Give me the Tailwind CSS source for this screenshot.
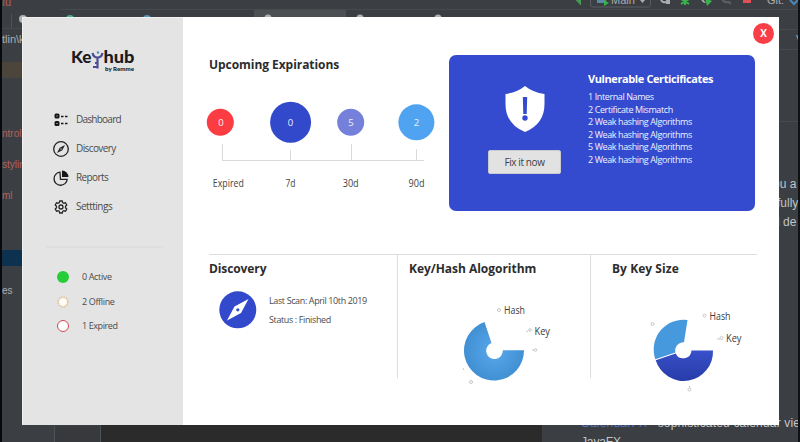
<!DOCTYPE html>
<html lang="en">
<head>
<meta charset="utf-8">
<title>Keyhub</title>
<script src="https://cdn.jsdelivr.net/npm/@tailwindcss/browser@4"></script>
</head>
<body class="relative h-[442px] w-[800px] overflow-hidden bg-[#3b3e43] font-['Open_Sans','Noto_Sans',sans-serif] text-[#2c2c2c]">

<!-- IDE behind the window -->
<svg class="absolute inset-0" width="800" height="442" viewBox="0 0 800 442" font-family="Liberation Sans, sans-serif">
  <rect x="101" y="425" width="441" height="17" fill="#2b2b2b"/>
  <rect x="55" y="426" width="45" height="16" fill="#37393c"/>
  <path d="M54.500 426v16M100.500 426v16" stroke="#505356"/>
  <rect x="0" y="62" width="22" height="16" fill="#4b453c"/>
  <rect x="0" y="250" width="22" height="16" fill="#0d324f"/>
  <path d="M0 28.500h22M60 9.500h740" stroke="#474a4d"/>
  <rect x="254" y="10" width="92" height="8" fill="#4d5053"/>
  <path d="M779 29.500h21M779 49.500h21M779 121.500h21" stroke="#474a4d"/>
  <path d="M11.500 14v14" stroke="#505356"/>
  <g fill="#aeb2b5"><circle cx="23" cy="19" r="4"/><circle cx="268" cy="18" r="3.500"/><circle cx="360" cy="18" r="3.500"/><circle cx="438" cy="18" r="3.500"/></g>
  <circle cx="70" cy="19" r="4" fill="#49ad8d"/><circle cx="147" cy="19" r="4" fill="#5695b5"/>
  <g font-size="11" fill="#aaaeb1">
    <text x="2" y="6" fill="#b36058">ıu</text>
    <text x="2" y="43">tlin\k</text>
    <text x="2" y="137" font-size="10" fill="#b36058">ntrol</text>
    <text x="2" y="168" font-size="10" fill="#b36058">styling</text>
    <text x="2" y="199" font-size="10" fill="#b36058">ml</text>
    <text x="2" y="294" font-size="10">es</text>
    <text x="796" y="43">V</text>
  </g>
  <rect x="590.500" y="-4" width="60" height="11" rx="2" fill="none" stroke="#5a5d60"/>
  <rect x="597" y="-4" width="9" height="7" fill="#5d87a8"/><path d="M604 0l5 3-5 3z" fill="#37b34a"/>
  <text x="611" y="4" font-size="11" fill="#aaaeb1">Main</text>
  <path d="M640 0h5l-2.500 3z" fill="#aaaeb1"/>
  <path d="M574-3l6 6v-6" stroke="#499c54" stroke-width="2" fill="none"/>
  <path d="M661-2q0 5 5 4" stroke="#aaaeb1" stroke-width="2" fill="none"/><rect x="666" y="0" width="4" height="4" fill="#aaaeb1"/>
  <path d="M685-4v9M681 4l8-5M689 4l-8-5" stroke="#38b549" stroke-width="2"/>
  <path d="M701-3q0 6 5 6z" fill="#aaaeb1"/><path d="M705-2l7 3-5 5z" fill="#38b549"/>
  <path d="M722-2q1 5 7 4l2 2" stroke="#5d6063" stroke-width="2" fill="none"/>
  <rect x="743" y="-4" width="8" height="7" fill="#e05055"/>
  <text x="767" y="4" font-size="11" fill="#aaaeb1">Git:</text>
  <path d="M790 0l4 4 4-4" stroke="#4b87b8" stroke-width="2" fill="none"/>
  <g font-size="12" fill="#c2c4c6">
    <text x="773" y="188">ou a</text><text x="777" y="207">fully</text><text x="777" y="226">l de</text>
    <text x="581" y="427" fill="#5673b8" textLength="66">CalendarFX</text>
    <text x="650" y="427" textLength="150">- sophisticated calendar vie</text>
    <text x="581" y="446" textLength="40">JavaFX</text>
  </g>
  <rect width="2" height="442" fill="#07090c"/><rect x="798" width="2" height="442" fill="#101215"/>
</svg>

<!-- Application window -->
<div class="absolute left-[22px] top-[17px] flex h-[408px] w-[757px] bg-white">
  <aside class="flex w-[161px] shrink-0 flex-col border-l border-t border-[#f1f1f1] bg-[#e4e4e4]">
    <svg class="ml-[47px] mt-[29px]" width="68" height="28" viewBox="0 0 68 28" font-family="Lato, sans-serif" font-weight="900" fill="#1c1b20">
      <text x="1" y="16" font-size="17" textLength="20.500" lengthAdjust="spacingAndGlyphs">Ke</text>
      <text x="33.500" y="16" font-size="17" textLength="31" lengthAdjust="spacingAndGlyphs">hub</text>
      <path d="M22.500 6q1 4.500 5 4.500t5-4.500M27.500 10v11.500M27.500 16h-2.500M27.500 20h-4.500" fill="none" stroke="#4b4c91" stroke-width="2.200"/>
      <circle cx="28" cy="5.500" r="1.200" fill="#5284c4"/>
      <text x="35" y="24" font-size="6" textLength="29" lengthAdjust="spacingAndGlyphs">by Remme</text>
    </svg>

    <nav class="mt-[30px] flex flex-col pl-[30px] text-[10px] text-[#4b4b4b]">
      <a class="flex h-[29px] items-center gap-[7px]">
        <svg width="16" height="16" viewBox="0 0 16 16" fill="none" stroke="#161616" stroke-width="2"><rect x="2.500" y="2.500" width="3" height="3" rx=".5"/><rect x="2.500" y="10" width="3" height="3" rx=".5"/><path d="M8 4.500h2.500M12 4.500h2.500M8 11.500h2.500M12 11.500h2.500" stroke-width="1.300"/></svg>
        <span class="tracking-[-0.75px]">Dashboard</span>
      </a>
      <a class="flex h-[29px] items-center gap-[7px]">
        <svg width="16" height="16" viewBox="0 0 16 16"><circle cx="8" cy="8" r="7.300" fill="none" stroke="#222" stroke-width="1.300"/><path d="M12 4L9.300 9.300 4 12l2.700-5.300z" fill="#222"/><circle cx="8" cy="8" r=".7" fill="#e4e4e4"/></svg>
        <span class="tracking-[-0.6px]">Discovery</span>
      </a>
      <a class="flex h-[29px] items-center gap-[7px]">
        <svg width="16" height="16" viewBox="0 0 16 16"><path d="M7 2.100a6.600 6.600 0 1 0 7.200 7.200H7.500z" fill="none" stroke="#222" stroke-width="1.300"/><path d="M9 .5a6.600 6.600 0 0 1 6.500 6.500H9z" fill="#161616"/></svg>
        <span class="tracking-[-0.6px]">Reports</span>
      </a>
      <a class="flex h-[29px] items-center gap-[7px]">
        <svg width="16" height="16" viewBox="0 0 16 16" fill="none" stroke="#252525" stroke-width="1.300" stroke-linejoin="round"><path d="M6.700 2h2.600l.4 1.700 1.100.6 1.700-.6 1.300 2.300-1.300 1.200v1.600l1.300 1.200-1.300 2.300-1.700-.6-1.100.6-.4 1.700H6.700l-.4-1.700-1.100-.6-1.700.6L2.200 10l1.300-1.200V7.200L2.200 6l1.300-2.300 1.700.6 1.100-.6z"/><circle cx="8" cy="8" r="2"/></svg>
        <span class="tracking-[-0.5px]">Setttings</span>
      </a>
    </nav>

    <div class="ml-[23px] mt-[25px] h-[2px] w-[117px] bg-[#dee0e0]"></div>

    <ul class="mt-[17px] flex flex-col pl-[34px] text-[9px] text-[#4b4b4b]">
      <li class="flex h-[24px] items-center gap-[13px]"><span class="size-[12px] rounded-full bg-[#27cd38]"></span><span class="tracking-[-0.35px]">0 Active</span></li>
      <li class="flex h-[25px] items-center gap-[13px]"><svg width="12" height="12" viewBox="0 0 12 12"><circle cx="6" cy="6" r="4.800" fill="#fffdf7" stroke="#e0c9a6" stroke-width="1.800" stroke-dasharray="1.800 .7"/></svg><span class="tracking-[-0.35px]">2 Offline</span></li>
      <li class="flex h-[23px] items-center gap-[13px]"><span class="size-[12px] rounded-full border border-[#cc4a55] bg-white"></span><span class="tracking-[-0.4px]">1 Expired</span></li>
    </ul>
  </aside>

  <main class="flex flex-1 flex-col pl-[20px]">
    <div class="flex h-[237px]">
      <section class="w-[246px] pt-[39px]">
        <h2 class="pl-[6px] text-[12px] font-bold leading-[18px] tracking-[-0.05px]">Upcoming Expirations</h2>
        <svg class="mt-[22px]" width="240" height="100" viewBox="203 96 240 100" font-size="10" text-anchor="middle" fill="#444">
          <path d="M222.500 144v17M290.500 150v11M351.500 144v17M416.500 149v12M222 160.500h202" stroke="#d9d9d9" fill="none"/>
          <circle cx="220.300" cy="122.300" r="13.500" fill="#fb3d43"/><circle cx="290.600" cy="122.300" r="20.500" fill="#3349cb"/>
          <circle cx="350.700" cy="122.300" r="13.500" fill="#7480da"/><circle cx="416.400" cy="122.300" r="18" fill="#4fa3f1"/>
          <g fill="#eef1ff" font-size="9.500"><text x="221" y="126">0</text><text x="290.500" y="126">0</text><text x="351" y="126">5</text><text x="416.500" y="126">2</text></g>
          <text x="228.300" y="187" textLength="31" lengthAdjust="spacingAndGlyphs">Expired</text><text x="290.500" y="187" textLength="10" lengthAdjust="spacingAndGlyphs">7d</text>
          <text x="350.700" y="187" textLength="16" lengthAdjust="spacingAndGlyphs">30d</text><text x="416.500" y="187" textLength="16" lengthAdjust="spacingAndGlyphs">90d</text>
        </svg>
      </section>

      <section class="mt-[38px] flex h-[156px] w-[306px] rounded-[7px] bg-[#354bcf] text-white">
        <div class="flex w-[139px] flex-col items-center pl-[12px] pt-[31px]">
          <svg width="40" height="47" viewBox="0 0 40 47"><path d="M20 0q8 6.500 19.500 8v10q0 20-19.500 28Q.5 38 .5 18V8Q12 6.500 20 0z" fill="#fff"/><path d="M17.800 11h4.400l-.5 17h-3.400z" fill="#354bcf"/><circle cx="20" cy="32" r="2.700" fill="#354bcf"/></svg>
          <button class="mt-[17px] h-[24px] w-[73px] rounded-[2px] border border-[#c9c9cf] bg-[#e2e2e3] text-[10px] tracking-[-0.4px] text-[#404040]">Fix it now</button>
        </div>
        <div class="pt-[15px]">
          <h3 class="text-[11px] font-bold leading-[17px] tracking-[-0.4px]">Vulnerable Certicificates</h3>
          <ul class="mt-[4px] text-[9px] leading-[12.5px] tracking-[-0.4px] text-[#eef1ff]">
            <li>1 Internal Names</li><li>2 Certificate Mismatch</li><li>2 Weak hashing Algorithms</li><li>2 Weak hashing Algorithms</li><li>5 Weak hashing Algorithms</li><li>2 Weak hashing Algorithms</li>
          </ul>
        </div>
      </section>
    </div>

    <div class="ml-[6px] grid h-[150px] w-[548px] grid-cols-[189px_193px_1fr] border-t border-[#dcdcdc]">
      <section class="h-[123px] border-r border-[#dedede] pt-[5px]">
        <h2 class="text-[12px] font-bold leading-[18px] tracking-[-0.1px]">Discovery</h2>
        <div class="mt-[13px] flex gap-[12px] pl-[10px]">
          <svg width="38" height="38" viewBox="0 0 38 38"><circle cx="18.800" cy="18.800" r="18.500" fill="#3349cb"/><path d="M29.500 8L22 22 8 29.500 15.500 15.500z" fill="#fff"/><circle cx="18.800" cy="18.800" r="1.600" fill="#3349cb"/></svg>
          <div class="text-[9px] leading-[19px] tracking-[-0.38px] text-[#4b4b4b]"><p>Last Scan: April 10th 2019</p><p>Status : Finished</p></div>
        </div>
      </section>
      <section class="h-[123px] border-r border-[#dedede] pt-[5px]">
        <h2 class="pl-[11px] text-[12px] font-bold leading-[18px] tracking-[-0.03px]">Key/Hash Alogorithm</h2>
        <svg class="mt-[19px]" width="192" height="100" viewBox="398 297 192 100" font-size="10" fill="#3a3a3a">
          <defs><radialGradient id="sky" gradientUnits="userSpaceOnUse" cx="494.500" cy="350.500" r="30"><stop offset=".3" stop-color="#51a1e4"/><stop offset="1" stop-color="#4190d4"/></radialGradient></defs>
          <path d="M484.500 322.100A30 30 0 1 0 524 350.300H502.800A8.300 8.300 0 1 1 491.500 343z" fill="url(#sky)"/>
          <text x="504" y="314" textLength="21" lengthAdjust="spacingAndGlyphs">Hash</text><text x="534.500" y="334.500" textLength="15.500" lengthAdjust="spacingAndGlyphs">Key</text>
          <g fill="none" stroke="#c7c7c7"><circle cx="499" cy="310" r="1.500"/><path d="M526 332l2-1M532 350h2"/><circle cx="530" cy="330" r="1.300"/><circle cx="535.500" cy="350" r="1.300"/><circle cx="471" cy="382" r="1.500"/></g>
          <circle cx="463.500" cy="369" r=".6" fill="#999"/>
        </svg>
      </section>
      <section class="pt-[5px]">
        <h2 class="pl-[21px] text-[12px] font-bold leading-[18px] tracking-[0.05px]">By Key Size</h2>
        <svg class="mt-[19px]" width="165" height="100" viewBox="591 297 165 100" font-size="10" fill="#3a3a3a">
          <defs><linearGradient id="navy" x2="0" y2="1"><stop stop-color="#3850c9"/><stop offset="1" stop-color="#273ca9"/></linearGradient></defs>
          <path d="M687.500 320A29.800 29.800 0 0 0 655.300 359.200L675.400 352.600A8.300 8.300 0 0 1 684 342.300z" fill="#4699dc"/>
          <path d="M655.700 360.200A29.300 29.300 0 0 0 713 350.500H691.500A8.300 8.300 0 0 1 675.700 353.500z" fill="url(#navy)"/>
          <text x="709.500" y="319.500" textLength="21" lengthAdjust="spacingAndGlyphs">Hash</text><text x="726" y="341.500" textLength="15.500" lengthAdjust="spacingAndGlyphs">Key</text>
          <g fill="none" stroke="#c7c7c7"><circle cx="704.500" cy="315.500" r="1.500"/><path d="M717 339h3M689.500 386v2"/><circle cx="721.500" cy="338" r="1.500"/><circle cx="652.500" cy="324" r="1.500"/><circle cx="689.500" cy="389.500" r="1.500"/></g>
        </svg>
      </section>
    </div>
  </main>

  <button class="absolute right-[5px] top-[6px] flex size-[21px] items-center justify-center rounded-full bg-[#fa3e48] pb-px text-[10px] font-bold leading-none text-white">X</button>
</div>
</body>
</html>
